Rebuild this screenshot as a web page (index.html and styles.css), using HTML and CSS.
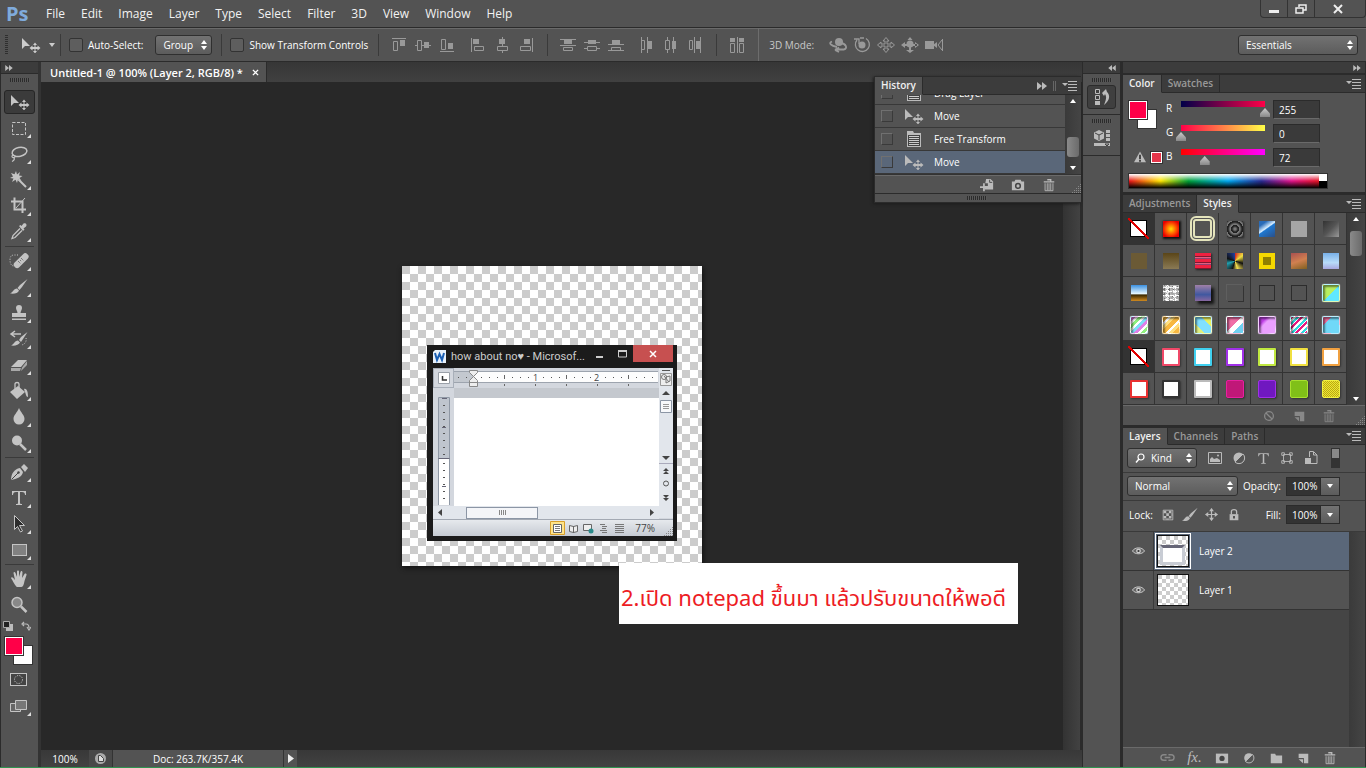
FILE: index.html
```
<!DOCTYPE html>
<html lang="en">
  <head>
    <meta charset="UTF-8" />
    <meta name="viewport" content="width=device-width, initial-scale=1.0" />
    <title>Untitled-1 @ 100% (Layer 2, RGB/8) *</title>
    <link rel="stylesheet" href="styles.css">
  </head>
  <body>
    <!-- icon set -->
    <svg class="sprite" width="0" height="0" aria-hidden="true">
      <symbol id="i-move" viewBox="0 0 20 16">
        <path d="M1 1v11l3-3h5z" />
        <path d="M14 5.500l2 2.500h-1.500v2h2V8.500L19.500 11 16.500 13.500V12h-2v2H16l-2 2.500L12 14h1.500v-2h-2v1.500L8.500 11l3-2.500V10h2V8H12z" />
      </symbol>
      <symbol id="i-marquee" viewBox="0 0 20 20"><rect x="3.500" y="4.500" width="13" height="12" fill="none" stroke="currentColor" stroke-dasharray="3 1.500" /></symbol>
      <symbol id="i-lasso" viewBox="0 0 20 20"><g fill="none" stroke="currentColor" stroke-width="1.500"><ellipse cx="10.500" cy="8" rx="7.500" ry="4.500" transform="rotate(-12 10 8)" /><path d="M4 11c-2 1-1 3 1 2.500s2-2-1-2.500m1 2.500c1 2-1 3.500-2 4" stroke-width="1.200" /></g></symbol>
      <symbol id="i-wand" viewBox="0 0 20 20"><path d="M7 1l1 3.500L11 2 10 5.500l3.500.5L10.500 8l2 3L9 9.500 8 13 6.500 9.800 3 12l1.500-3.500L1 8l3-1.500L2 3l3.500 1.200z" /><path d="M9.500 9.500L17 17" stroke="currentColor" stroke-width="2" /></symbol>
      <symbol id="i-crop" viewBox="0 0 20 20"><path d="M5.500 1.500v12H17M2 5.500h11.500V17" fill="none" stroke="currentColor" stroke-width="2" /><path d="M7 12l9-10" fill="none" stroke="currentColor" /></symbol>
      <symbol id="i-dropper" viewBox="0 0 20 20"><path d="M10 4l1.500-1 1 1 2-2.500c2-1 4 1 2.500 3L14.500 6.500l1 1-1.500 1.500z" /><path d="M11 6.500L4 13.500l-1 3 3-1 7-7" fill="none" stroke="currentColor" stroke-width="1.300" /></symbol>
      <symbol id="i-heal" viewBox="0 0 20 20"><path d="M9 4H5C2 4 1 6 1 9s1 6 4 6" fill="none" stroke="currentColor" stroke-dasharray="1 1.500" /><rect x="3" y="6.500" width="18" height="6.500" rx="3" transform="rotate(-45 12 9.500)" /><path d="M9 10l3 3m0-6l3 3m-4-1l1.500 1.500" stroke="#555" stroke-dasharray="1 1" /></symbol>
      <symbol id="i-brush" viewBox="0 0 20 20"><path d="M18.500 2L11 8l-2.500 3 2 2L13 10zM8 11.500l2 2c-1 3-5 3.500-9 3 3-1 3.500-5 7-5z" /></symbol>
      <symbol id="i-stamp" viewBox="0 0 20 20"><path d="M10 2a3 3 0 013 3c0 2-1.500 3-1.500 5H17v4H3v-4h5.500C8.500 8 7 7 7 5a3 3 0 013-3zM3 15.500h14V17H3z" /></symbol>
      <symbol id="i-histbrush" viewBox="0 0 20 20"><path d="M18.500 3L12 8l-2 3 2 2L14 10zM9 11.500l2 2c-1 2.500-5 3.500-9 3 3-1 3.500-5 7-5z" /><path d="M3 5h9M6 2L2 5l4 3" fill="none" stroke="currentColor" stroke-width="1.500" /><path d="M17 9c1 4-2 7-5 7" fill="none" stroke="currentColor" stroke-dasharray="1 1.500" /></symbol>
      <symbol id="i-eraser" viewBox="0 0 20 20"><path d="M2 12l7-7h9l-6 7z" /><path d="M2 13v3h9l1-3zM13 12.500l-1 3.500 6-6V6z" opacity=".75" /></symbol>
      <symbol id="i-bucket" viewBox="0 0 20 20"><path d="M9 5l7 6-8 7-7-7zM15 8c3-1 4 3 4 8-2 0-2-3-3-5z" /><path d="M6 9V3c0-2 4-2 4 0v4" fill="none" stroke="currentColor" stroke-width="1.300" /></symbol>
      <symbol id="i-drop" viewBox="0 0 20 20"><path d="M10 1c2 5 5.500 7 5.500 11a5.500 5.500 0 01-11 0C4.500 8 8 6 10 1z" /></symbol>
      <symbol id="i-dodge" viewBox="0 0 20 20"><circle cx="8" cy="7.500" r="5" /><path d="M11 11l6 6" stroke="currentColor" stroke-width="2.500" /></symbol>
      <symbol id="i-pen" viewBox="0 0 20 20"><path d="M2 18c0-6 3-11 9-12l3 4c-1 5-6 7-12 8zM12 5l3-3 4 4-3 4z" /><path d="M2.500 17.500L9 11" stroke="#444" /><circle cx="9.500" cy="10.500" r="1.200" fill="#444" /></symbol>
      <symbol id="i-type" viewBox="0 0 20 20"><path d="M3 3h14v4h-1c0-2-1-3-3-3h-2v11c0 1 1 1 2 1v1H7v-1c1 0 2 0 2-1V4H7C5 4 4 5 4 7H3z" /></symbol>
      <symbol id="i-select" viewBox="0 0 20 20"><path d="M5.500 1.500v14l3-3 3 5.500 2-1-3-5.500h5z" fill="#2b2b2b" stroke="currentColor" /></symbol>
      <symbol id="i-rect" viewBox="0 0 20 20"><rect x="3.500" y="4.500" width="14" height="11" fill="#818181" stroke="currentColor" /></symbol>
      <symbol id="i-hand" viewBox="0 0 20 20"><path d="M2 9c1-2 3 1 4 2L4.500 4c0-1.500 1.500-1.500 2 0L8 8V2.500c0-1.500 2-1.500 2 0V8l1.500-5c.5-1.500 2-1 2 .5L13 9l2.500-4c1-1 2.500 0 2 1L15.500 12c-.5 3-1.500 6-3 6H8c-2-1-4-6-6-9z" /></symbol>
      <symbol id="i-zoom" viewBox="0 0 20 20"><circle cx="8" cy="7.500" r="5" fill="#888" stroke="currentColor" stroke-width="1.500" /><path d="M12 11.500l5.500 5.500" stroke="currentColor" stroke-width="2.500" /></symbol>
      <symbol id="i-mask" viewBox="0 0 20 20"><rect x="1.500" y="3.500" width="16" height="12" fill="#444" stroke="currentColor" /><circle cx="9.500" cy="9.500" r="4" fill="none" stroke="currentColor" stroke-dasharray="1.200 1.200" /></symbol>
      <symbol id="i-screen" viewBox="0 0 20 20"><path d="M1.500 7.500h10v8h-10z" fill="#666" stroke="currentColor" /><path d="M6.500 4.500h11v9h-11z" fill="#777" stroke="currentColor" /></symbol>

      <symbol id="a-top" viewBox="0 0 16 16"><path d="M1 1.500h14M2.500 4.500h4v9h-4z" fill="none" stroke="currentColor" /><path d="M9 3h5v6H9z" /></symbol>
      <symbol id="a-mid" viewBox="0 0 16 16"><path d="M0 8.500h2.500m4 0H9m5 0h2M2.500 3.500h4v10h-4z" fill="none" stroke="currentColor" /><path d="M9 5h5v6H9z" /></symbol>
      <symbol id="a-bottom" viewBox="0 0 16 16"><path d="M1 14.500h14M2.500 2.500h4v10h-4z" fill="none" stroke="currentColor" /><path d="M9 6h5v6H9z" /></symbol>
      <symbol id="a-dist" viewBox="0 0 16 16"><path d="M0 2.500h16M0 8.500h16M3.500 10.500h9v3h-9z" fill="none" stroke="currentColor" /><path d="M4 3h8v4H4z" /></symbol>
      <symbol id="a-distmid" viewBox="0 0 16 16"><path d="M0 5.500h16M0 11.500h3m10 0h3M3.500 9.500h9v4h-9z" fill="none" stroke="currentColor" /><path d="M4 3h8v4H4z" /></symbol>
      <symbol id="a-distend" viewBox="0 0 16 16"><path d="M0 7.500h16M0 13.500h16M3.500 10.500h9v3h-9z" fill="none" stroke="currentColor" /><path d="M4 3h8v4H4z" /></symbol>
      <symbol id="a-arrange" viewBox="0 0 16 16"><path d="M1.500 6.500h4v9h-4zM10.500 6.500h4v9h-4zM8.500 0v16" fill="none" stroke="currentColor" /><path d="M1 1h5v4H1zM10 1h5v4h-5z" /></symbol>
      <symbol id="m-orbit" viewBox="0 0 20 16"><circle cx="11" cy="5" r="4" /><path d="M13 6c5 1 7 5 3 6.500H7M9 10C3 9 0 6 4 4.500M7 13l4-2.500M7 13l4 2" fill="none" stroke="currentColor" stroke-width="1.800" /></symbol>
      <symbol id="m-roll" viewBox="0 0 20 16"><circle cx="10" cy="8" r="3.500" /><path d="M5 3a7 7 0 109-1.500M2 2h5v5M8 1h4" fill="none" stroke="currentColor" stroke-width="1.300" /></symbol>
      <symbol id="m-pan" viewBox="0 0 20 16"><path d="M10 .5L13 4h-2v3h4V5l3.500 3L15 11V9h-4v3h2l-3 3.500L7 12h2V9H5v2L1.500 8 5 5v2h4V4H7z" fill="none" stroke="currentColor" /></symbol>
      <symbol id="m-slide" viewBox="0 0 20 16"><circle cx="10" cy="7" r="3.500" /><path d="M10 0l2.500 3h-5zM10 16l-4-3h8zM1 8l4-3v6zM19 8l-4-3v6zM9 10h2v4H9zM3 7h4v2H3zM13 7h4v2h-4z" /></symbol>
      <symbol id="m-scale" viewBox="0 0 20 16"><path d="M1 4h9v8H1zM9 8l4-3v6z" /><path d="M18.500 2v12M18 3l-4 5 4 5" fill="none" stroke="currentColor" /></symbol>

      <symbol id="i-ff" viewBox="0 0 10 8"><path d="M0 0l5 4-5 4zM5 0l5 4-5 4z" /></symbol>
      <symbol id="i-rew" viewBox="0 0 10 8"><path d="M5 0L0 4l5 4zM10 0L5 4l5 4z" /></symbol>
      <symbol id="i-menu" viewBox="0 0 15 10"><path d="M0 2h6L3 5zM6 0h9v1H6zM6 3h9v1H6zM6 6h9v1H6zM6 9h9v1H6z" /></symbol>
      <symbol id="i-updown" viewBox="0 0 6 10"><path d="M0 4l3-4 3 4zM0 6l3 4 3-4z" /></symbol>
      <symbol id="i-down" viewBox="0 0 6 4"><path d="M0 0h6L3 4z" /></symbol>
      <symbol id="i-up" viewBox="0 0 6 4"><path d="M0 4h6L3 0z" /></symbol>
      <symbol id="i-x" viewBox="0 0 8 8"><path d="M1 1l6 6M7 1L1 7" stroke="currentColor" stroke-width="1.500" /></symbol>
      <symbol id="i-corner" viewBox="0 0 9 9"><path d="M8.500 0v9M6.500 2v7M4.500 4v5M2.500 6v3M.5 8v1" stroke="#888" stroke-dasharray="1 1" /></symbol>

      <symbol id="h-doc" viewBox="0 0 16 16"><path d="M1 0h6l1 2h7v14H1z" /><path d="M2 4h12v11H2z" fill="#444" /><path d="M3 5.500h10M3 7.500h10M3 9.500h10M3 11.500h10M3 13.500h10" stroke="#ccc" /></symbol>
      <symbol id="h-newdoc" viewBox="0 0 16 16"><path d="M7 1h5l3 3v9H5V9h4V6H6z" /><path d="M4.500 6v9M0 10.500h9" stroke="currentColor" stroke-width="2" /><path d="M11 2v3h3" fill="none" stroke="#444" /></symbol>
      <symbol id="h-camera" viewBox="0 0 16 16"><path d="M1 4h3l1-2h6l1 2h3v10H1z" /><circle cx="8" cy="9" r="3.500" fill="#444" /><circle cx="8" cy="9" r="1.800" /></symbol>
      <symbol id="i-trash" viewBox="0 0 16 16"><path d="M6 2h4v2M3 4.500h10M2 4.500h12" fill="none" stroke="currentColor" stroke-width="1.500" /><path d="M3.500 6v8.500h9V6M6 6v8m2-8v8m2-8v8" fill="none" stroke="currentColor" /></symbol>
      <symbol id="d-history" viewBox="0 0 16 18"><path d="M1.500 1.500h4v4h-4zM1.500 7.500h4v4h-4z" fill="none" stroke="currentColor" /><path d="M1 13h5v4H1zM8 5l4-4 1 3c4 4 2 9-3 13 2-5 3-8 1-11l-1 2z" /></symbol>
      <symbol id="d-props" viewBox="0 0 18 18"><path d="M6 1l5 2.500v6L6 12 1 9.500v-6zM13 1h4v3h-4zM13 5h4v3h-4zM13 9h4v3h-4zM1 14h16v3H1z" /><path d="M2 4l4 2 4-2M6 6v5M12 15h4l-2 2z" fill="none" stroke="#444" /></symbol>

      <symbol id="l-image" viewBox="0 0 16 16"><path d="M1.500 2.500h13v11h-13z" fill="none" stroke="currentColor" /><path d="M3 12V9l2-2 2 2 3-1 3 2v2z" /><circle cx="11" cy="5.500" r="1" /></symbol>
      <symbol id="l-adjust" viewBox="0 0 16 16"><circle cx="8" cy="8" r="5.500" /><path d="M12 4a5.500 5.500 0 01-8 8z" fill="#555" stroke="currentColor" /></symbol>
      <symbol id="l-shape" viewBox="0 0 16 16"><path d="M4 4h8v8H4zM2 2h3v3H2zM11 2h3v3h-3zM2 11h3v3H2zM11 11h3v3h-3z" fill="#555" stroke="currentColor" /></symbol>
      <symbol id="l-smart" viewBox="0 0 16 16"><path d="M6.500 7V1.500h4L14 5v8.500H8M10.500 2v3H14" fill="none" stroke="currentColor" /><path d="M2 8h6v6H2z" /></symbol>
      <symbol id="l-check" viewBox="0 0 16 16"><path d="M2.500 2.500h11v11h-11z" fill="none" stroke="currentColor" /><path d="M3 3h3v3H3zM9 3h3v3H9zM6 6h3v3H6zM3 9h3v3H3zM9 9h3v3H9zM12 6h1v3h-1zM6 12h3v1H6z" /></symbol>
      <symbol id="l-move" viewBox="0 0 16 16"><path d="M8 1v14M1 8h14" stroke="currentColor" stroke-width="1.500" /><path d="M8 0l3 4H5zM8 16l3-4H5zM0 8l4-3v6zM16 8l-4-3v6z" /></symbol>
      <symbol id="l-lock" viewBox="0 0 16 16"><path d="M3 7h10v7H3z" /><path d="M5 7V4c0-3 6-3 6 0v3" fill="none" stroke="currentColor" stroke-width="1.500" /><path d="M7 9h2v3H7z" fill="#444" /></symbol>
      <symbol id="l-eye" viewBox="0 0 14 10"><path d="M.5 5C3 .5 11 .5 13.500 5 11 9 3 9 .5 5z" fill="#666" stroke="currentColor" /><circle cx="7" cy="5" r="2.600" /><circle cx="7" cy="5" r="1.200" fill="#333" /></symbol>
      <symbol id="l-link" viewBox="0 0 16 16"><path d="M7 5H4a2.500 2.500 0 000 6h3M9 5h3a2.500 2.500 0 010 6H9M5 8h6" fill="none" stroke="currentColor" stroke-width="1.500" /></symbol>
      <symbol id="l-mask" viewBox="0 0 16 16"><path d="M1 3h14v11H1z" /><circle cx="8" cy="8.500" r="3" fill="#444" /></symbol>
      <symbol id="l-folder" viewBox="0 0 16 16"><path d="M2 3h5l1 2h7v9H2z" /></symbol>
      <symbol id="l-new" viewBox="0 0 16 16"><path d="M3 3h11v11H9V8H3z" /><path d="M3 9.500h5V14z" /></symbol>
      <symbol id="l-none" viewBox="0 0 16 16"><circle cx="8" cy="8" r="5" fill="none" stroke="currentColor" stroke-width="1.500" /><path d="M4.500 4.500l7 7" stroke="currentColor" stroke-width="1.500" /></symbol>
      <symbol id="l-search" viewBox="0 0 10 10"><circle cx="6" cy="4" r="3" fill="none" stroke="currentColor" stroke-width="1.200" /><path d="M4 6L1 9.500" stroke="currentColor" stroke-width="1.500" /></symbol>
    </svg>

    <header class="menubar">
      <span class="logo">Ps</span>
      <nav class="menus">
        <a href="#">File</a><a href="#">Edit</a><a href="#">Image</a><a href="#">Layer</a><a href="#">Type</a><a href="#">Select</a><a href="#">Filter</a><a href="#">3D</a><a href="#">View</a><a href="#">Window</a><a href="#">Help</a>
      </nav>
      <div class="window-buttons">
        <button aria-label="Minimize"><svg width="12" height="10"><path d="M1 6h10v3H1z" fill="#eee" /></svg></button>
        <button aria-label="Restore"><svg width="12" height="10"><path d="M4 3V1h7v5H8M1 4h7v5H1z" fill="none" stroke="#eee" stroke-width="1.500" /></svg></button>
        <button class="wide" aria-label="Close"><svg width="12" height="10"><path d="M2 1l8 8M10 1L2 9" stroke="#eee" stroke-width="2" /></svg></button>
      </div>
    </header>

    <div class="options">
      <span class="grip-v"></span>
      <button class="current-tool" aria-label="Move Tool"><svg width="20" height="16"><use href="#i-move" /></svg><svg width="6" height="4"><use href="#i-down" /></svg></button>
      <span class="sep"></span>
      <label class="check"><input type="checkbox" />Auto-Select:</label>
      <span class="drop group"><select aria-label="Auto-Select"><option>Group</option><option>Layer</option></select><svg width="6" height="10"><use href="#i-updown" /></svg></span>
      <span class="sep"></span>
      <label class="check"><input type="checkbox" />Show Transform Controls</label>
      <span class="sep wide-sep"></span>
      <div class="icons">
        <button aria-label="Align top edges"><svg width="16" height="16"><use href="#a-top" /></svg></button>
        <button aria-label="Align vertical centers"><svg width="16" height="16"><use href="#a-mid" /></svg></button>
        <button aria-label="Align bottom edges"><svg width="16" height="16"><use href="#a-bottom" /></svg></button>
      </div>
      <div class="icons turned">
        <button aria-label="Align left edges"><svg width="16" height="16"><use href="#a-top" /></svg></button>
        <button aria-label="Align horizontal centers"><svg width="16" height="16"><use href="#a-mid" /></svg></button>
        <button aria-label="Align right edges"><svg width="16" height="16"><use href="#a-bottom" /></svg></button>
      </div>
      <span class="sep"></span>
      <div class="icons">
        <button aria-label="Distribute top edges"><svg width="16" height="16"><use href="#a-dist" /></svg></button>
        <button aria-label="Distribute vertical centers"><svg width="16" height="16"><use href="#a-distmid" /></svg></button>
        <button aria-label="Distribute bottom edges"><svg width="16" height="16"><use href="#a-distend" /></svg></button>
      </div>
      <div class="icons turned spread">
        <button aria-label="Distribute left edges"><svg width="16" height="16"><use href="#a-distend" /></svg></button>
        <button aria-label="Distribute horizontal centers"><svg width="16" height="16"><use href="#a-distmid" /></svg></button>
        <button aria-label="Distribute right edges"><svg width="16" height="16"><use href="#a-dist" /></svg></button>
      </div>
      <span class="sep"></span>
      <div class="icons"><button aria-label="Auto-align layers"><svg width="16" height="16"><use href="#a-arrange" /></svg></button></div>
      <div class="mode">
        <span>3D Mode:</span>
        <div class="icons">
          <button aria-label="Rotate"><svg width="20" height="16"><use href="#m-orbit" /></svg></button>
          <button aria-label="Roll"><svg width="20" height="16"><use href="#m-roll" /></svg></button>
          <button aria-label="Drag"><svg width="20" height="16"><use href="#m-pan" /></svg></button>
          <button aria-label="Slide"><svg width="20" height="16"><use href="#m-slide" /></svg></button>
          <button aria-label="Scale"><svg width="20" height="16"><use href="#m-scale" /></svg></button>
        </div>
      </div>
      <span class="drop workspace"><select aria-label="Workspace"><option>Essentials</option></select><svg width="6" height="10"><use href="#i-updown" /></svg></span>
    </div>

    <div class="workarea">
      <aside class="toolbar">
        <div class="strip"><svg width="8" height="6"><use href="#i-ff" /></svg></div>
        <span class="grip"></span>
        <button class="tool active" aria-label="Move"><svg width="20" height="16"><use href="#i-move" /></svg></button>
        <button class="tool more" aria-label="Marquee"><svg><use href="#i-marquee" /></svg></button>
        <button class="tool more" aria-label="Lasso"><svg><use href="#i-lasso" /></svg></button>
        <button class="tool more" aria-label="Magic wand"><svg><use href="#i-wand" /></svg></button>
        <button class="tool more" aria-label="Crop"><svg><use href="#i-crop" /></svg></button>
        <button class="tool more" aria-label="Eyedropper"><svg><use href="#i-dropper" /></svg></button>
        <hr />
        <button class="tool more" aria-label="Spot healing"><svg><use href="#i-heal" /></svg></button>
        <button class="tool more" aria-label="Brush"><svg><use href="#i-brush" /></svg></button>
        <button class="tool more" aria-label="Clone stamp"><svg><use href="#i-stamp" /></svg></button>
        <button class="tool more" aria-label="History brush"><svg><use href="#i-histbrush" /></svg></button>
        <button class="tool more" aria-label="Eraser"><svg><use href="#i-eraser" /></svg></button>
        <button class="tool more" aria-label="Paint bucket"><svg><use href="#i-bucket" /></svg></button>
        <button class="tool more" aria-label="Blur"><svg><use href="#i-drop" /></svg></button>
        <button class="tool more" aria-label="Dodge"><svg><use href="#i-dodge" /></svg></button>
        <hr />
        <button class="tool more" aria-label="Pen"><svg><use href="#i-pen" /></svg></button>
        <button class="tool more" aria-label="Type"><svg><use href="#i-type" /></svg></button>
        <button class="tool more" aria-label="Path selection"><svg><use href="#i-select" /></svg></button>
        <button class="tool more" aria-label="Rectangle"><svg><use href="#i-rect" /></svg></button>
        <hr />
        <button class="tool more" aria-label="Hand"><svg><use href="#i-hand" /></svg></button>
        <button class="tool" aria-label="Zoom"><svg><use href="#i-zoom" /></svg></button>
        <div class="mini">
          <button aria-label="Default colors"><svg width="10" height="10"><path d="M3 3h7v7H3z" fill="#bbb" /><path d="M.5.5h6v6h-6z" fill="#222" stroke="#aaa" /></svg></button>
          <button aria-label="Swap colors"><svg width="10" height="10"><path d="M2 3h3q3 0 3 4M3 1L1 3l2 2M6 6l2 3 2-3" fill="none" stroke="#bbb" stroke-width="1.200" /></svg></button>
        </div>
        <div class="colors"><button class="back" aria-label="Background color"></button><button class="fore" aria-label="Foreground color"></button></div>
        <button class="tool" aria-label="Quick mask"><svg><use href="#i-mask" /></svg></button>
        <button class="tool more" aria-label="Screen mode"><svg><use href="#i-screen" /></svg></button>
      </aside>

      <main class="document">
        <div class="doc-tabs"><button class="doc-tab">Untitled-1 @ 100% (Layer 2, RGB/8) * <svg width="7" height="7"><use href="#i-x" /></svg></button></div>
        <div class="view">
          <div class="stage">
            <div class="artboard">
              <section class="word">
                <div class="word-title">
                  <svg width="13" height="13" viewBox="0 0 13 13"><path d="M0 2l2-2h11v13H0z" fill="#e8f2fc" /><path d="M2 3l2 7 2.500-6L9 10l2-7" fill="none" stroke="#1a5fb4" stroke-width="2" /></svg>
                  <h1>how about no♥ - Microsof...</h1>
                  <svg class="mm" width="40" height="17"><path d="M3 11h7v2H3z" fill="#ccc" /><path d="M25.500 6h8v6h-8z" fill="none" stroke="#ccc" /><path d="M25 6h9" stroke="#ccc" stroke-width="2" /></svg>
                  <button class="word-close" aria-label="Close"><svg width="8" height="8"><use href="#i-x" /></svg></button>
                </div>
                <div class="word-body">
                  <div class="word-edit">
                    <div class="word-main">
                      <div class="ruler">
                        <span class="corner"><svg width="12" height="12"><path d="M.5.5h11v11H.5z" fill="#fff" stroke="#9aa0a8" /><path d="M4.500 4v4H9" fill="none" stroke="#333" stroke-width="1.500" /></svg></span>
                        <svg width="204" height="20" viewBox="0 0 204 20">
                          <path d="M0 4h204v10H0z" fill="#fdfdfd" /><path d="M0 4h20v10H0z" fill="#c3c8cf" /><path d="M0 3.500h204M0 14.500h204" stroke="#9da4ae" />
                          <path d="M4 9.500h16" stroke="#555" stroke-dasharray="1 7" />
                          <path d="M27 9.500h20M58 9.500h20M89 9.500h20M120 9.500h20M151 9.500h20M182 9.500h20" stroke="#555" stroke-dasharray="1 7" />
                          <path d="M50.500 7v4M112.500 7v4M174.500 7v4M50.500 16v2M81.500 16v2M112.500 16v2M143.500 16v2M174.500 16v2" stroke="#666" />
                          <text x="79" y="13">1</text><text x="140" y="13">2</text>
                          <path d="M15.500 2.500h8v2l-4 4 4 4v6h-8v-6l4-4-4-4z" fill="#eee" stroke="#888" /><path d="M15 14.500h8" stroke="#888" />
                        </svg>
                      </div>
                      <div class="page-row">
                        <div class="vruler"><svg width="12" height="108"><path d="M.5.5h11v108H.5z" fill="#fff" stroke="#8f98a5" /><path d="M1 1h10v60H1z" fill="#bfc5ce" /><path d="M4 1.500h5M4 30.500h4M4 89.500h4M.5 61.500h11" stroke="#667" /><path d="M6 8v52M6 66v42" stroke="#555" stroke-dasharray="1 6" stroke-width="2" /></svg></div>
                        <div class="page"></div>
                      </div>
                      <div class="hscroll"><svg width="4" height="7"><path d="M4 0v7L0 3.500z" fill="#444" /></svg><span class="hthumb"><i></i></span><svg width="4" height="7"><path d="M0 0v7l4-3.500z" fill="#444" /></svg></div>
                    </div>
                    <svg class="vscroll" width="14" height="150" viewBox="0 0 14 150">
                      <path d="M3 2.500h8" stroke="#555" /><path d="M1.500 5.500h11v12h-11z" fill="#eee" stroke="#999" /><circle cx="5" cy="9" r="2.500" fill="none" stroke="#777" /><path d="M5 8l5 6M7 9l4-1v5l-4 2z" fill="none" stroke="#777" />
                      <path d="M3 27h8L7 23zM3 88h8l-4 4z" fill="#444" /><path d="M1.500 32.500h11v12h-11z" fill="#f8f9fb" stroke="#8c96a5" /><path d="M4 36.500h6M4 38.500h6M4 40.500h6" stroke="#999" />
                      <path d="M0 95.500h14" stroke="#aab" /><path d="M4 103h6l-3-3zM4 106h6l-3-3zM4 127h6l-3 3zM4 130h6l-3 3z" fill="#444" /><circle cx="7" cy="115.500" r="2.500" fill="none" stroke="#555" />
                    </svg>
                  </div>
                  <div class="word-status">
                    <svg width="76" height="15" viewBox="0 0 76 15">
                      <path d="M.5.5h14v13H.5z" fill="#ffe48a" stroke="#d9a02a" /><path d="M3.500 3.500h8v8h-8z" fill="#fff" stroke="#666" /><path d="M5 5.500h5M5 7.500h5M5 9.500h5" stroke="#777" />
                      <path d="M19.500 4.500l4 1 4-1v6l-4 1-4-1zM23.500 5v7" fill="#eee" stroke="#666" /><path d="M33.500 3.500h8v6h-8z" fill="#eee" stroke="#666" /><circle cx="41" cy="10" r="2.500" fill="#2a8a8a" />
                      <path d="M50 3.500h5M52 5.500h5M52 7.500h4M50 9.500h7M52 11.500h5M65 3.500h9M65 5.500h9M65 7.500h9M65 9.500h9M65 11.500h9" stroke="#777" />
                    </svg>
                    <span>77%</span>
                    <svg width="9" height="9"><use href="#i-corner" /></svg>
                  </div>
                </div>
              </section>
              <p class="note">2.เปิด notepad ขึ้นมา แล้วปรับขนาดให้พอดี</p>
            </div>
          </div>
          <div class="view-scroll"></div>
        </div>
        <footer class="statusbar">
          <span class="zoom-level">100%</span>
          <button class="share" aria-label="Share"><svg width="11" height="11"><circle cx="5.500" cy="5.500" r="5.500" fill="#aaa" /><path d="M3.500 8.500v-6h2l3 3v3z" fill="#ddd" stroke="#444" /></svg></button>
          <span class="docsize">Doc: 263.7K/357.4K</span>
          <button class="more-info" aria-label="Status options"><svg width="6" height="9"><path d="M0 0l6 4.500L0 9z" fill="#eee" /></svg></button>
        </footer>

        <section class="history">
          <div class="tabs"><button class="tab on">History</button><span class="tools-end"><svg width="10" height="8"><use href="#i-ff" /></svg><i class="pair"></i><svg width="15" height="10"><use href="#i-menu" /></svg></span></div>
          <div class="history-body">
            <ol class="history-list">
              <li><i class="box"></i><svg width="16" height="16"><use href="#h-doc" /></svg>Drag Layer</li>
              <li><i class="box"></i><svg width="20" height="16"><use href="#i-move" /></svg>Move</li>
              <li><i class="box"></i><svg width="16" height="16"><use href="#h-doc" /></svg>Free Transform</li>
              <li class="current"><i class="box"></i><svg width="20" height="16"><use href="#i-move" /></svg>Move</li>
            </ol>
            <div class="scroll"><svg width="6" height="4"><use href="#i-up" /></svg><i class="thumb"></i><svg width="6" height="4"><use href="#i-down" /></svg></div>
          </div>
          <div class="panel-foot">
            <button aria-label="New document from state"><svg width="14" height="14"><use href="#h-newdoc" /></svg></button>
            <button aria-label="New snapshot"><svg width="16" height="14"><use href="#h-camera" /></svg></button>
            <button aria-label="Delete"><svg width="14" height="14"><use href="#i-trash" /></svg></button>
            <svg class="resize" width="9" height="9"><use href="#i-corner" /></svg>
          </div>
          <div class="drag"><span class="grip"></span></div>
        </section>
      </main>

      <aside class="dock">
        <div class="strip end"><svg width="8" height="6"><use href="#i-rew" /></svg></div>
        <div class="dock-group"><span class="grip"></span><button class="pressed" aria-label="History"><svg width="16" height="18"><use href="#d-history" /></svg></button></div>
        <div class="dock-group"><span class="grip"></span><button aria-label="Properties"><svg width="18" height="18"><use href="#d-props" /></svg></button></div>
      </aside>

      <aside class="panels">
        <div class="strip end"><svg width="8" height="6"><use href="#i-ff" /></svg></div>

        <section class="panel">
          <div class="tabs"><button class="tab on">Color</button><button class="tab">Swatches</button><span class="tools-end"><svg width="15" height="10"><use href="#i-menu" /></svg></span></div>
          <div class="color-body">
            <div class="color-main">
              <div class="color-left">
                <div class="colors"><button class="back" aria-label="Background color"></button><button class="fore" aria-label="Foreground color"></button></div>
                <div class="gamut"><svg width="12" height="12" viewBox="0 0 14 13"><path d="M7 0l7 12.500H0z" fill="#bbb" /><path d="M7 4v5m0 1v2" stroke="#333" stroke-width="2" /></svg><i></i></div>
              </div>
              <div class="sliders">
                <label for="r">R</label><input id="r" class="to-r" type="range" max="255" value="255" /><input type="text" value="255" aria-label="Red" />
                <label for="g">G</label><input id="g" class="to-g" type="range" max="255" value="0" /><input type="text" value="0" aria-label="Green" />
                <label for="b">B</label><input id="b" class="to-b" type="range" max="255" value="72" /><input type="text" value="72" aria-label="Blue" />
              </div>
            </div>
            <div class="ramp"><i></i></div>
          </div>
        </section>

        <section class="panel">
          <div class="tabs"><button class="tab">Adjustments</button><button class="tab on">Styles</button><span class="tools-end"><svg width="15" height="10"><use href="#i-menu" /></svg></span></div>
          <div class="styles-body">
            <div class="style-grid">
              <button class="none" aria-label="Default style"><i></i></button><button aria-label="Sunspots"><i class="s1"></i></button><button aria-label="Outline"><i class="s2"></i></button><button aria-label="Tire"><i class="s3"></i></button><button aria-label="Blue glass"><i class="s4"></i></button><button aria-label="Gray"><i class="s5"></i></button><button aria-label="Smoke"><i class="s6"></i></button>
              <button aria-label="Umber"><i class="s7"></i></button><button aria-label="Bronze"><i class="s8"></i></button><button aria-label="Weave"><i class="s9"></i></button><button aria-label="Abstract"><i class="s10"></i></button><button aria-label="Gold"><i class="s11"></i></button><button aria-label="Sunset"><i class="s12"></i></button><button aria-label="Sky glass"><i class="s13"></i></button>
              <button aria-label="Chrome"><i class="s14"></i></button><button aria-label="Noise"><i class="s15"></i></button><button aria-label="Twilight"><i class="s16"></i></button><button aria-label="Shade"><i class="s17"></i></button><button aria-label="Stroke"><i class="s18"></i></button><button aria-label="Thin stroke"><i class="s18"></i></button><button aria-label="Lime aqua"><i class="candy s19"></i></button>
              <button aria-label="Stripes"><i class="candy s20"></i></button><button aria-label="Orange stripes"><i class="candy s21"></i></button><button aria-label="Aqua lime"><i class="candy s22"></i></button><button aria-label="Rose"><i class="candy s23"></i></button><button aria-label="Lilac"><i class="candy s24"></i></button><button aria-label="Magenta stripes"><i class="candy s25"></i></button><button aria-label="Aqua rose"><i class="candy s26"></i></button>
              <button class="none" aria-label="No style"><i></i></button><button aria-label="Pink frame"><i class="frame pink"></i></button><button aria-label="Aqua frame"><i class="frame aqua"></i></button><button aria-label="Violet frame"><i class="frame violet"></i></button><button aria-label="Lime frame"><i class="frame lime"></i></button><button aria-label="Yellow frame"><i class="frame yellow"></i></button><button aria-label="Orange frame"><i class="frame orange"></i></button>
              <button aria-label="Red frame"><i class="frame red"></i></button><button aria-label="Black frame"><i class="frame black"></i></button><button aria-label="Silver frame"><i class="frame silver"></i></button><button aria-label="Magenta"><i class="gel g1"></i></button><button aria-label="Purple"><i class="gel g2"></i></button><button aria-label="Green"><i class="gel g3"></i></button><button aria-label="Yellow"><i class="gel g4"></i></button>
            </div>
            <div class="scroll"><svg width="6" height="4"><use href="#i-up" /></svg><i class="thumb"></i><svg width="6" height="4"><use href="#i-down" /></svg></div>
          </div>
          <div class="panel-foot dim">
            <button aria-label="Clear style"><svg width="14" height="14"><use href="#l-none" /></svg></button>
            <button aria-label="New style"><svg width="14" height="14"><use href="#l-new" /></svg></button>
            <button aria-label="Delete style"><svg width="14" height="14"><use href="#i-trash" /></svg></button>
            <svg class="resize" width="9" height="9"><use href="#i-corner" /></svg>
          </div>
        </section>

        <section class="panel layers">
          <div class="tabs"><button class="tab on">Layers</button><button class="tab">Channels</button><button class="tab">Paths</button><span class="tools-end"><svg width="15" height="10"><use href="#i-menu" /></svg></span></div>
          <div class="row">
            <span class="drop kind"><svg width="10" height="10"><use href="#l-search" /></svg><select aria-label="Filter type"><option>Kind</option></select><svg width="6" height="10"><use href="#i-updown" /></svg></span>
            <div class="icons filters">
              <button aria-label="Pixel layers"><svg width="16" height="16"><use href="#l-image" /></svg></button>
              <button aria-label="Adjustment layers"><svg width="16" height="16"><use href="#l-adjust" /></svg></button>
              <button aria-label="Type layers"><svg width="15" height="15"><use href="#i-type" /></svg></button>
              <button aria-label="Shape layers"><svg width="14" height="14"><use href="#l-shape" /></svg></button>
              <button aria-label="Smart objects"><svg width="16" height="16"><use href="#l-smart" /></svg></button>
              <button class="toggle" aria-label="Toggle filtering"><i></i></button>
            </div>
          </div>
          <div class="row">
            <span class="drop blend"><select aria-label="Blend mode"><option>Normal</option></select><svg width="6" height="10"><use href="#i-updown" /></svg></span>
            <label class="value">Opacity: <input type="text" value="100%" /></label><button class="pop" aria-label="Opacity slider"><svg width="6" height="4"><use href="#i-down" /></svg></button>
          </div>
          <div class="row lock-row">
            <span>Lock:</span>
            <div class="icons locks">
              <button aria-label="Lock transparent pixels"><svg width="14" height="14"><use href="#l-check" /></svg></button>
              <button aria-label="Lock image pixels"><svg width="18" height="18"><use href="#i-brush" /></svg></button>
              <button aria-label="Lock position"><svg width="13" height="13"><use href="#l-move" /></svg></button>
              <button aria-label="Lock all"><svg width="14" height="14"><use href="#l-lock" /></svg></button>
            </div>
            <label class="value">Fill: <input type="text" value="100%" /></label><button class="pop" aria-label="Fill slider"><svg width="6" height="4"><use href="#i-down" /></svg></button>
          </div>
          <div class="layers-body">
            <ul class="layer-list">
              <li class="current"><button class="eye" aria-label="Hide Layer 2"><svg width="13" height="10"><use href="#l-eye" /></svg></button><span class="thumbnail picked"><i class="mini-window"></i></span>Layer 2</li>
              <li><button class="eye" aria-label="Hide Layer 1"><svg width="13" height="10"><use href="#l-eye" /></svg></button><span class="thumbnail"></span>Layer 1</li>
            </ul>
            <div class="scroll"></div>
          </div>
          <div class="panel-foot layer-foot">
            <button class="faint" aria-label="Link layers"><svg width="15" height="15"><use href="#l-link" /></svg></button>
            <button class="fx" aria-label="Layer style">fx.</button>
            <button aria-label="Add mask"><svg width="14" height="14"><use href="#l-mask" /></svg></button>
            <button aria-label="New adjustment layer"><svg width="14" height="14"><use href="#l-adjust" /></svg></button>
            <button aria-label="New group"><svg width="14" height="14"><use href="#l-folder" /></svg></button>
            <button aria-label="New layer"><svg width="14" height="14"><use href="#l-new" /></svg></button>
            <button aria-label="Delete layer"><svg width="14" height="14"><use href="#i-trash" /></svg></button>
          </div>
        </section>
      </aside>
    </div>
  </body>
</html>
```
FILE: styles.css
```
* {
  box-sizing: border-box;
}
body {
  margin: 0;
  height: 100vh;
  display: flex;
  flex-direction: column;
  overflow: hidden;
  background-color: #535353;
  border-bottom: 1px solid #2f9450;
  color: #fff;
  font-family: "Open Sans", "Noto Sans", sans-serif;
  font-size: 10px;
  font-weight: 400;
}
button,
input,
select {
  font: inherit;
  color: inherit;
  margin: 0;
  padding: 0;
  border: none;
  background: none;
}
button {
  display: flex;
  align-items: center;
  justify-content: center;
}
svg {
  fill: currentColor;
  flex: none;
}
i {
  display: block;
}
.sprite {
  position: absolute;
}

/* menu bar */
.menubar {
  display: flex;
  align-items: center;
  height: 27px;
  flex: none;
}
.logo {
  width: 39px;
  padding-left: 6px;
  color: #7fabdc;
  font-size: 20px;
  font-weight: 700;
  line-height: 24px;
}
.menus {
  display: flex;
  gap: 16px;
  padding-left: 7px;
  font-size: 12px;
}
.menus a {
  color: #f2f2f2;
  text-decoration: none;
}
.window-buttons {
  display: flex;
  align-self: flex-start;
  margin-left: auto;
  height: 18px;
  border: 1px solid #333;
  border-top: none;
  border-radius: 0 0 4px 4px;
}
.window-buttons button {
  width: 27px;
  border-right: 1px solid #333;
}
.window-buttons .wide {
  width: 50px;
  padding-right: 4px;
  border: none;
}

/* options bar */
.options {
  display: flex;
  align-items: center;
  height: 35px;
  flex: none;
  border-top: 1px solid #2b2b2b;
  border-bottom: 1px solid #2b2b2b;
  box-shadow: inset 0 1px #6a6a6a;
}
.grip-v {
  width: 3px;
  height: 20px;
  margin-left: 5px;
  background: repeating-linear-gradient(#2f2f2f 0 1px, #535353 1px 2px);
}
.current-tool {
  width: 52px;
  padding-left: 8px;
  gap: 8px;
  color: #ccc;
}
.sep {
  width: 1px;
  height: 22px;
  margin-right: 8px;
  background-color: #3a3a3a;
}
.wide-sep {
  margin-left: 10px;
}
.check {
  display: flex;
  align-items: center;
  gap: 5px;
  white-space: nowrap;
}
.check input {
  appearance: none;
  width: 14px;
  height: 14px;
  border: 1px solid #333;
  border-radius: 2px;
  background-color: #5e5e5e;
}
.drop {
  display: flex;
  align-items: center;
  height: 20px;
  padding: 0 4px 0 7px;
  border: 1px solid #2f2f2f;
  border-radius: 3px;
  background: linear-gradient(#727272, #5c5c5c);
}
.drop select {
  appearance: none;
  flex: 1;
  min-width: 0;
}
.group {
  width: 57px;
  margin: 0 9px 0 12px;
}
.icons {
  display: flex;
}
.options .icons {
  color: #999;
}
.icons button {
  width: 24px;
  height: 20px;
}
.turned {
  padding-left: 7px;
}
.turned svg {
  transform: rotate(-90deg);
}
.spread svg {
  transform: rotate(90deg);
}
.options .turned + .sep {
  margin-left: 9px;
}
.mode {
  display: flex;
  align-items: center;
  align-self: stretch;
  gap: 12px;
  margin-left: 9px;
  padding-left: 10px;
  border-left: 1px solid #6d6d6d;
  color: #c8c8c8;
}
.workspace {
  width: 120px;
  margin: 0 8px 0 auto;
}

/* work area */
.workarea {
  display: flex;
  flex: 1;
  min-height: 0;
}
.strip {
  display: flex;
  align-items: center;
  height: 12px;
  flex: none;
  padding: 0 4px;
  background-color: #3c3c3c;
  border-bottom: 1px solid #2b2b2b;
  color: #bbb;
}
.strip.end {
  justify-content: flex-end;
}
.grip {
  display: block;
  width: 20px;
  height: 4px;
  background: repeating-linear-gradient(90deg, #2b2b2b 0 1px, #585858 1px 2px);
}

.toolbar {
  width: 41px;
  flex: none;
  border-left: 1px solid #2b2b2b;
  border-right: 3px solid #333;
  color: #c4c4c4;
}
.toolbar > .grip {
  margin: 4px auto 8px;
}
.tool {
  width: 35px;
  height: 26px;
  position: relative;
}
.tool svg {
  width: 20px;
  height: 20px;
}
.tool.active {
  width: 31px;
  height: 24px;
  margin: 0 3px 1px;
  border: 1px solid #262626;
  border-radius: 3px;
  background-color: #3b3b3b;
}
.toolbar .tool.active svg {
  height: 16px;
}
.more::after {
  content: "";
  position: absolute;
  right: 5px;
  bottom: 3px;
  border: 2px solid transparent;
  border-right-color: #ddd;
  border-bottom-color: #ddd;
}
.toolbar hr {
  height: 1px;
  margin: 1px 4px;
  border: none;
  background-color: #3a3a3a;
}
.mini {
  display: flex;
  gap: 8px;
  padding: 3px 2px 5px;
}
.colors {
  position: relative;
  width: 29px;
  height: 29px;
}
.toolbar .colors {
  margin: 0 3px 2px;
}
.colors button {
  position: absolute;
  width: 20px;
  height: 20px;
  border: 1px solid #333;
}
.back {
  right: 0;
  bottom: 0;
  background-color: #fff;
}
.fore {
  left: 0;
  top: 0;
  background-color: #ff0048;
  box-shadow: inset 0 0 0 1px #fff;
}

/* document */
.document {
  position: relative;
  display: flex;
  flex-direction: column;
  flex: 1;
  min-width: 0;
}
.doc-tabs {
  display: flex;
  height: 20px;
  flex: none;
  background: linear-gradient(#363636, #404040);
}
.doc-tab {
  gap: 9px;
  padding: 0 7px 0 9px;
  background-color: #535353;
  border-right: 1px solid #2b2b2b;
  font-size: 11px;
  font-weight: 600;
  white-space: nowrap;
}
.view {
  display: flex;
  flex: 1;
}
.stage {
  display: flex;
  align-items: center;
  justify-content: center;
  flex: 1;
  background-color: #282828;
}
.view-scroll {
  width: 19px;
  background: linear-gradient(90deg, #333, #424242);
  border-right: 2px solid #2b2b2b;
}
.artboard {
  position: relative;
  width: 300px;
  height: 300px;
  background: repeating-conic-gradient(#fff 0 25%, #ccc 0 50%) 0 0 / 16px 16px;
  box-shadow: 1px 2px 5px #111;
}
.statusbar {
  display: flex;
  height: 17px;
  flex: none;
  background: linear-gradient(#383838, #424242);
}
.statusbar > * {
  display: flex;
  align-items: center;
  justify-content: center;
}
.zoom-level {
  width: 48px;
}
.share {
  width: 24px;
  background-color: #484848;
  border-right: 1px solid #333;
}
.docsize {
  width: 171px;
  background-color: #535353;
  border-right: 1px solid #333;
}
.more-info {
  width: 13px;
  background-color: #535353;
}

/* word window lying on the artboard */
.word {
  position: absolute;
  left: 25px;
  top: 79px;
  width: 250px;
  height: 196px;
  display: flex;
  flex-direction: column;
  padding: 0 4px 5px 6px;
  background-color: #1b1b1b;
  color: #444;
}
.word-title {
  display: flex;
  align-items: center;
  height: 23px;
  flex: none;
}
.word-title h1 {
  flex: 1;
  min-width: 0;
  margin: 0;
  padding-left: 5px;
  color: #ccc;
  font-family: Roboto, sans-serif;
  font-size: 11px;
  font-weight: 400;
  white-space: nowrap;
}
.mm {
  align-self: flex-start;
}
.word-close {
  align-self: flex-start;
  width: 40px;
  height: 17px;
  background-color: #c75050;
  color: #fff;
}
.word-body {
  display: flex;
  flex-direction: column;
  flex: 1;
  background-color: #d3d7de;
}
.word-edit {
  display: flex;
  flex: 1;
}
.word-main {
  display: flex;
  flex-direction: column;
  flex: 1;
}
.ruler {
  display: flex;
}
.ruler text {
  font-size: 9px;
}
.corner {
  display: flex;
  align-items: center;
  justify-content: center;
  width: 21px;
  border: 1px solid #a8afb9;
}
.page-row {
  display: flex;
  flex: 1;
}
.vruler {
  width: 21px;
  padding: 9px 0 0 5px;
  height: 117px;
}
.page {
  flex: 1;
  border-top: 10px solid #c4c8ce;
  background-color: #fff;
}
.hscroll {
  display: flex;
  align-items: center;
  height: 13px;
  padding: 0 5px;
  background-color: #e2e6ec;
}
.hscroll svg:last-child {
  margin-left: auto;
}
.hthumb {
  display: flex;
  align-items: center;
  justify-content: center;
  width: 72px;
  height: 12px;
  margin-left: 24px;
  border: 1px solid #8c96a5;
  background-color: #f4f5f8;
}
.hthumb i {
  width: 7px;
  height: 5px;
  background: repeating-linear-gradient(90deg, #888 0 1px, #f4f5f8 1px 2px);
}
.vscroll {
  background-color: #e2e6ec;
}
.word-status {
  display: flex;
  align-items: center;
  justify-content: flex-end;
  gap: 9px;
  height: 17px;
  border-top: 1px solid #a3a9b3;
  background: linear-gradient(#e6e9ed, #c6cbd3);
}
.word-status svg:last-child {
  align-self: flex-end;
}
.note {
  position: absolute;
  left: 217px;
  top: 297px;
  width: 399px;
  height: 61px;
  margin: 0;
  padding: 13px 0 0 2px;
  background-color: #fff;
  color: #ed1c24;
  font-family: "Noto Sans Thai", "Open Sans", sans-serif;
  font-size: 22px;
  line-height: 48px;
  white-space: nowrap;
}

/* tabs and panels */
.tabs {
  display: flex;
  height: 19px;
  flex: none;
  background-color: #3c3c3c;
  border-top: 1px solid #2b2b2b;
  font-weight: 600;
}
.tab {
  padding: 0 6px 1px;
  border-right: 1px solid #2b2b2b;
  border-bottom: 1px solid #2b2b2b;
  color: #999;
}
.tab.on {
  background-color: #535353;
  border-bottom-color: #535353;
  color: #f0f0f0;
}
.tools-end {
  display: flex;
  align-items: center;
  justify-content: flex-end;
  gap: 6px;
  flex: 1;
  padding-right: 4px;
  border-bottom: 1px solid #2b2b2b;
  color: #bbb;
}
.pair {
  width: 3px;
  height: 10px;
  border: solid #666;
  border-width: 0 1px;
}
.scroll {
  display: flex;
  flex-direction: column;
  align-items: center;
  width: 16px;
  flex: none;
  padding: 4px 0;
  background: linear-gradient(90deg, #3a3a3a, #454545);
}
.scroll svg:last-child {
  margin-top: auto;
}
.thumb {
  width: 12px;
  height: 25px;
  margin-top: 10px;
  border-radius: 3px;
  background: linear-gradient(90deg, #8a8a8a, #6b6b6b);
}
.panel-foot {
  display: flex;
  align-items: center;
  justify-content: flex-end;
  gap: 16px;
  height: 20px;
  flex: none;
  border-top: 1px solid #6a6a6a;
  color: #bbb;
}
.resize {
  align-self: flex-end;
}

.history {
  position: absolute;
  top: 14px;
  right: 1px;
  width: 207px;
  background-color: #535353;
  border-left: 1px solid #2b2b2b;
  border-bottom: 1px solid #2b2b2b;
  box-shadow: -1px 1px 3px #1c1c1c;
}
.history-body {
  display: flex;
  height: 80px;
  border-bottom: 1px solid #333;
}
.history .thumb {
  height: 20px;
  margin-top: 34px;
}
.history-list {
  display: flex;
  flex-direction: column;
  justify-content: flex-end;
  flex: 1;
  height: 79px;
  margin: 0;
  padding: 0;
  overflow: hidden;
  list-style: none;
}
.history-list li {
  display: flex;
  align-items: center;
  height: 23px;
  flex: none;
  padding-left: 6px;
  border-bottom: 1px solid #383838;
}
.history-list svg {
  width: 20px;
  margin: 0 10px 0 11px;
  color: #bbb;
}
.history-list .current,
.layer-list .current {
  background-color: #5a6779;
}
.box {
  width: 12px;
  height: 12px;
  border: 1px solid #3a3a3a;
  border-top-color: #707070;
  border-left-color: #707070;
}
.history .panel-foot {
  height: 18px;
}
.drag {
  padding: 2px 0 2px 92px;
  border-top: 1px solid #2b2b2b;
}

.dock {
  width: 41px;
  flex: none;
  border-left: 1px solid #2b2b2b;
  border-right: 3px solid #2b2b2b;
  color: #bbb;
}
.dock-group {
  height: 41px;
  padding-top: 4px;
  border-bottom: 1px solid #2b2b2b;
}
.dock-group .grip {
  margin: 0 auto 3px;
}
.dock-group button {
  width: 29px;
  height: 24px;
  margin: 0 auto;
}
.pressed {
  border: 1px solid #2b2b2b;
  border-radius: 3px;
  background-color: #3f3f3f;
}
.panels {
  display: flex;
  flex-direction: column;
  width: 243px;
  flex: none;
  border-right: 1px solid #2b2b2b;
}
.panel {
  border-bottom: 2px solid #2b2b2b;
}

/* color */
.color-body {
  height: 99px;
  padding: 7px 5px 0;
}
.color-main {
  display: flex;
}
.color-left {
  width: 34px;
}
.gamut {
  display: flex;
  align-items: center;
  gap: 5px;
  padding: 22px 0 0 6px;
}
.gamut i {
  width: 11px;
  height: 11px;
  flex: none;
  border: 1px solid #fff;
  outline: 1px solid #333;
  background-color: #e5354a;
}
.sliders {
  display: grid;
  grid-template-columns: 14px 93px 47px;
  row-gap: 5px;
  padding-left: 4px;
}
.sliders label {
  line-height: 16px;
}
.sliders input[type="range"] {
  appearance: none;
  width: 94px;
  height: 17px;
  margin-left: -4px;
  background-repeat: no-repeat;
  background-position: 5px 1px;
  background-size: calc(100% - 10px) 6px;
}
.to-r {
  background-image: linear-gradient(90deg, #000048, #ff0048);
}
.to-g {
  background-image: linear-gradient(90deg, #ff0048, #ffff48);
}
.to-b {
  background-image: linear-gradient(90deg, #ff0000, #ff00ff);
}
.sliders input::-webkit-slider-thumb {
  appearance: none;
  width: 10px;
  height: 9px;
  margin-top: 8px;
  background: linear-gradient(#ccc, #888);
  clip-path: polygon(50% 0, 100% 60%, 100% 100%, 0 100%, 0 60%);
}
.sliders input[type="text"] {
  height: 19px;
  padding-left: 5px;
  border: 1px solid #2b2b2b;
  border-bottom-color: #6a6a6a;
  background-color: #3a3a3a;
}
.ramp {
  display: flex;
  justify-content: flex-end;
  width: 200px;
  height: 16px;
  margin-top: 6px;
  border: 1px solid #333;
  background: linear-gradient(#fff, transparent 50%, #000), linear-gradient(90deg, #e8141c, #ffe600 16%, #00a038 30%, #00a8f0 50%, #2a2a90 67%, #e0148c 82%, #e8141c 97%);
}
.ramp i {
  width: 8px;
  background: linear-gradient(#fff 50%, #000 50%);
}

/* styles */
.styles-body {
  display: flex;
}
.styles-body .scroll {
  width: 18px;
}
.style-grid {
  display: grid;
  grid-template-columns: repeat(7, 1fr);
  flex: 1;
}
.style-grid button {
  height: 32px;
  border-right: 1px solid #333;
  border-bottom: 1px solid #333;
}
.style-grid i {
  width: 16px;
  height: 16px;
}
.style-grid .none {
  background-color: #333;
}
.style-grid .none i {
  width: 21px;
  height: 21px;
  background: linear-gradient(to top right, transparent 46%, #e00000 46% 54%, transparent 54%), linear-gradient(#fff, #fff) center / 15px 15px no-repeat, linear-gradient(#000, #000) center / 17px 17px no-repeat;
}
.s1 {
  background: radial-gradient(#ffe000, #ff5a00 45%, #e80000 80%);
  box-shadow: 1px 1px 2px 1px #111;
}
.style-grid .s2 {
  width: 25px;
  height: 25px;
  border: 5px double #e4e4bc;
  border-radius: 6px;
}
.s3 {
  background: repeating-radial-gradient(#777 0 1px, #222 3px 4px);
  box-shadow: 1px 1px 2px #222;
}
.s4 {
  background: linear-gradient(145deg, #2a6cb8 20%, #d8eeff 45%, #1f78d0 50%, #2a4f88);
}
.s5 {
  background-color: #a5a5a5;
}
.s6 {
  background: linear-gradient(135deg, #333, #555 50%, #999);
}
.s7 {
  background-color: #6b5a35;
}
.s8 {
  background: linear-gradient(#5a4518, #8a7a55);
}
.s9 {
  background: repeating-linear-gradient(#f02040 0 3px, #801830 3px 4px, #e06080 4px 5px, #904070 5px 6px);
  box-shadow: 1px 1px 2px #222;
}
.s10 {
  background: conic-gradient(#d02020, #f0e040, #111 30%, #f5e050 45%, #111 55%, #20a0b0 70%, #111 80%, #2040a0);
}
.style-grid .s11 {
  border: 4px solid #f5d800;
  background-color: #907f00;
}
.s12 {
  background: linear-gradient(160deg, #a85050, #d08050 50%, #806020);
}
.s13 {
  background: linear-gradient(#78b0e8, #b8dcfa 60%, #a8a8e0);
}
.s14 {
  background: linear-gradient(#3b90e0, #e8f8ff 55%, #3a2800 62%, #d08a20);
}
.s15 {
  background: repeating-conic-gradient(#fff8 0 13%, #7778 17% 25%, #ddd8 25% 38%) 0 0 / 5px 5px, repeating-conic-gradient(#fff 0 20%, #666 20% 40%) 1px 2px / 7px 4px;
}
.s16 {
  background: linear-gradient(#a080a8, #4058a0 60%, #8868a0);
  box-shadow: 3px 3px 3px #111;
}
.s17 {
  box-shadow: 1px 1px 0 #333, -1px -1px 0 #5f5f5f;
}
.s18 {
  border: 1px solid #2c2c2c;
}
.style-grid .candy {
  width: 18px;
  height: 18px;
  border: 1px solid #fff8;
  border-radius: 2px;
  box-shadow: inset 2px 2px 2px #0007, 0 0 1px #fff;
}
.s19 {
  background: linear-gradient(135deg, #b8f060 50%, #60e8ff 50%);
}
.s20 {
  background: repeating-linear-gradient(135deg, #e080e8 0 3px, #fff 3px 5px, #90f080 5px 8px, #fff 8px 10px, #80e0f8 10px 13px);
}
.s21 {
  background: repeating-linear-gradient(135deg, #f8b840 0 4px, #fff 4px 6px, #ffe080 6px 9px);
}
.s22 {
  background: linear-gradient(45deg, #e0f080 30%, #80e0ff 30% 70%, #e8f060 70%);
}
.s23 {
  background: linear-gradient(135deg, #f070a8 45%, #fff 45% 68%, #70d0f0 68%);
}
.s24 {
  background: linear-gradient(135deg, #c040e8 25%, #eaa0ff 40%);
}
.s25 {
  background: repeating-linear-gradient(135deg, #e81880 0 2px, #fff 2px 4px, #30d8e0 4px 6px, #fff 6px 7px);
}
.s26 {
  background: linear-gradient(135deg, #f070a0 25%, #70d8f8 25%);
}
.style-grid .frame {
  width: 18px;
  height: 18px;
  border: 2px solid;
  border-radius: 1px;
  background-color: #fff;
  box-shadow: 1px 1px 2px #333;
}
.pink { color: #f04868; }
.aqua { color: #40d0f0; }
.violet { color: #a030e8; }
.lime { color: #c0e840; }
.yellow { color: #f0e040; }
.orange { color: #f0a040; }
.red { color: #e83030; }
.black { color: #333; }
.silver { color: #bbb; }
.style-grid .gel {
  width: 18px;
  height: 18px;
  border: 1px solid;
  border-radius: 2px;
  box-shadow: 1px 1px 2px #333;
}
.g1 {
  color: #e820a0;
  background-color: #c01878;
}
.g2 {
  color: #a030e8;
  background-color: #7018c0;
}
.g3 {
  color: #a8e030;
  background-color: #80c018;
}
.g4 {
  color: #f0f040;
  background: repeating-conic-gradient(#f0e830 0 25%, #b8a818 0 50%) 0 0 / 2px 2px;
}
.panel-foot.dim {
  color: #888;
}
.dim .resize {
  margin-left: -12px;
}
.dim button:nth-child(3) {
  margin-right: 16px;
}

/* layers */
.layers {
  display: flex;
  flex-direction: column;
  flex: 1;
  border-bottom: none;
}
.layers .tabs {
  height: 18px;
}
.row {
  display: flex;
  align-items: center;
  height: 28px;
  flex: none;
  padding: 0 25px 1px 4px;
  border-bottom: 1px solid #3a3a3a;
}
.kind {
  width: 70px;
  gap: 6px;
}
.filters {
  flex: 1;
  padding-left: 6px;
  color: #bbb;
}
.toggle {
  margin-left: auto;
}
.filters .toggle {
  width: 9px;
  align-items: flex-start;
  background-color: #333;
}
.toggle i {
  width: 7px;
  height: 9px;
  margin-top: 1px;
  background-color: #888;
}
.blend {
  width: 111px;
}
.value {
  display: flex;
  align-items: center;
  gap: 5px;
  margin-left: auto;
}
.value input {
  width: 35px;
  height: 19px;
  padding-left: 5px;
  border: 1px solid #2b2b2b;
  background-color: #333;
}
.pop {
  width: 19px;
  height: 19px;
  border: 1px solid #2b2b2b;
  border-left: none;
  background: linear-gradient(#727272, #5c5c5c);
}
.lock-row {
  height: 31px;
  padding-left: 6px;
  padding-bottom: 3px;
}
.locks {
  padding-left: 4px;
  color: #bbb;
}
.locks button {
  width: 22px;
}
.layers-body {
  display: flex;
  flex: 1;
  background-color: #454545;
}
.layer-list {
  flex: 1;
  margin: 0;
  padding: 0;
  list-style: none;
}
.layer-list li {
  display: flex;
  align-items: center;
  height: 39px;
  border-bottom: 1px solid #333;
  background-color: #535353;
}
.eye {
  align-self: stretch;
  width: 31px;
  background-color: #535353;
  border-right: 1px solid #3a3a3a;
  color: #ccc;
}
.thumbnail {
  display: flex;
  width: 32px;
  height: 32px;
  margin: 0 10px 0 3px;
  border: 1px solid #111;
  background: repeating-conic-gradient(#fff 0 25%, #ccc 0 50%) 0 0 / 8px 8px;
}
.picked {
  outline: 1px solid #fff;
  outline-offset: 1px;
}
.mini-window {
  width: 25px;
  height: 20px;
  margin: 9px 2px;
  border: 3px solid #c8ccd4;
  border-top-color: #667;
  background-color: #fff;
}
.layer-foot {
  gap: 12px;
  padding-right: 28px;
}
.layer-foot button {
  width: 15px;
}
.faint {
  color: #888;
}
.fx {
  font-family: "Liberation Serif", serif;
  font-size: 15px;
  font-style: italic;
}
```
